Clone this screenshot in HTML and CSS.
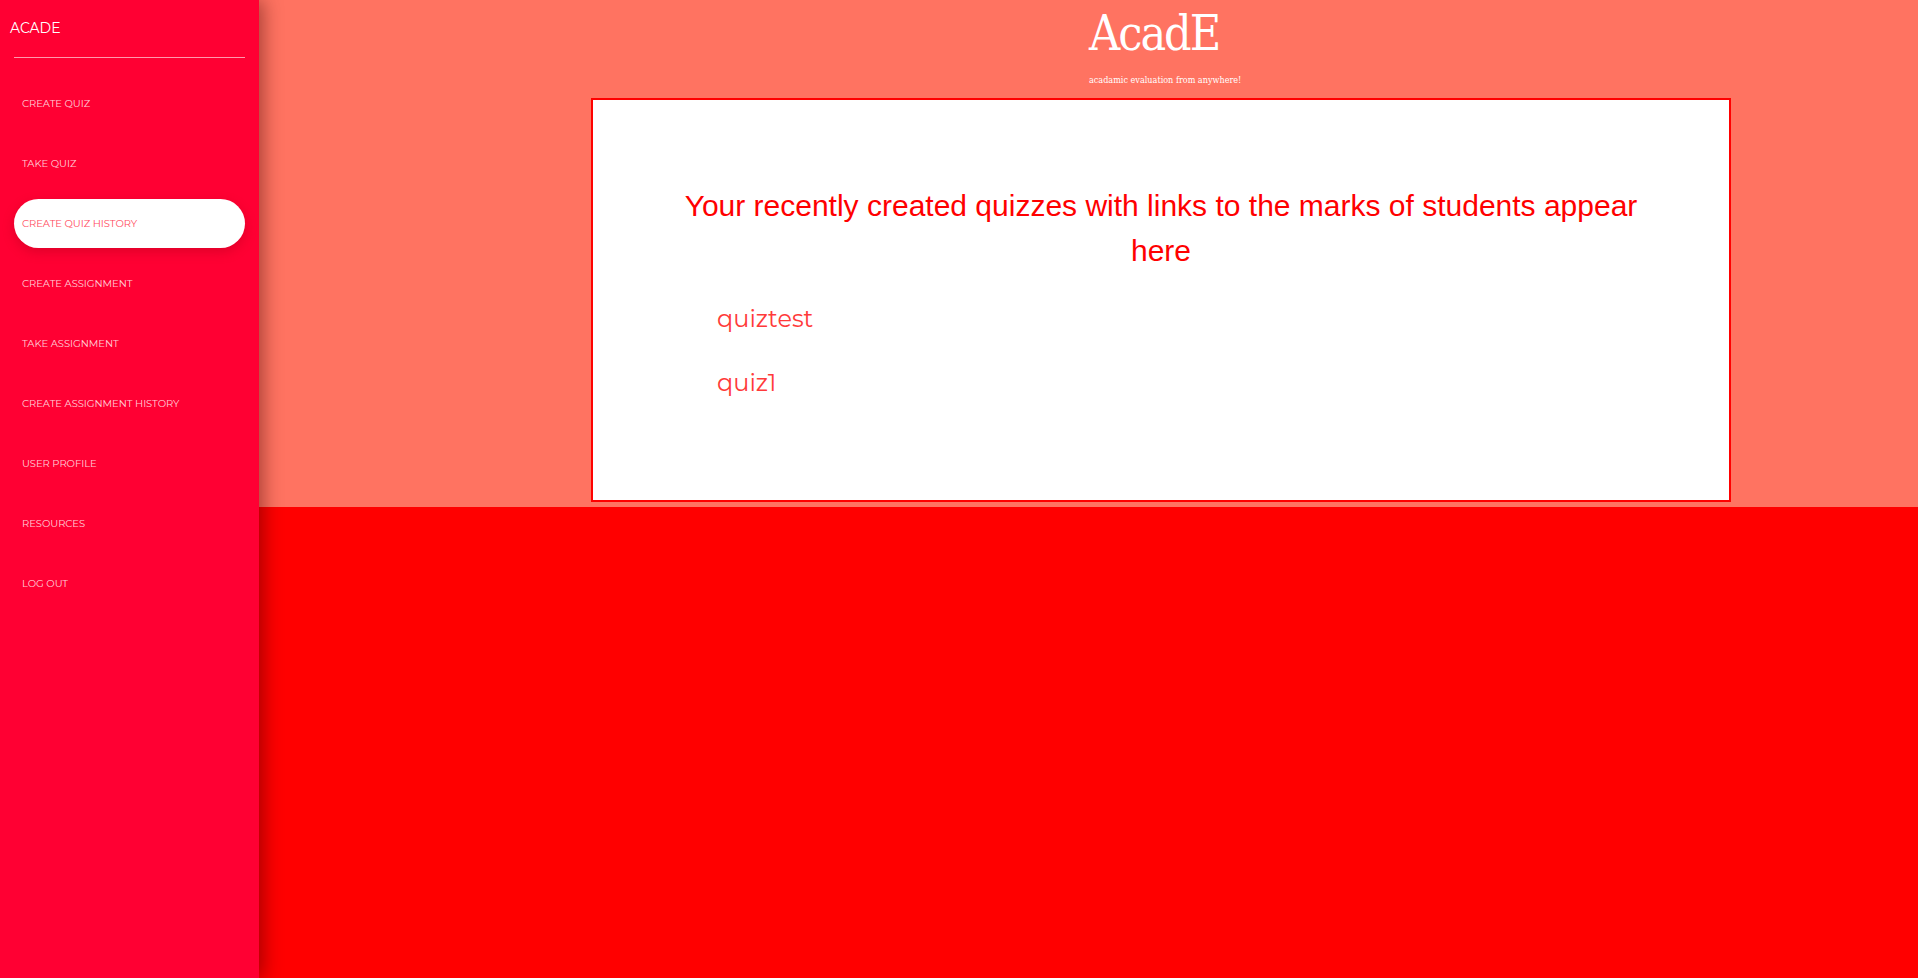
FILE: index.html
```html
<!DOCTYPE html>
<html>
<head>
<meta charset="utf-8">
<link rel="stylesheet" href="styles.css">
</head>
<body>
<div class="page">
  <aside class="sidebar">
    <div class="brand">ACADE</div>
    <hr class="rule">
    <nav class="menu">
      <a class="item">CREATE QUIZ</a>
      <a class="item">TAKE QUIZ</a>
      <a class="item active">CREATE QUIZ HISTORY</a>
      <a class="item">CREATE ASSIGNMENT</a>
      <a class="item">TAKE ASSIGNMENT</a>
      <a class="item">CREATE ASSIGNMENT HISTORY</a>
      <a class="item">USER PROFILE</a>
      <a class="item">RESOURCES</a>
      <a class="item">LOG OUT</a>
    </nav>
  </aside>
  <main class="main">
    <section class="top">
      <header class="hero">
        <h1 class="title">AcadE</h1>
        <p class="tagline">acadamic evaluation from anywhere!</p>
      </header>
      <div class="card">
        <h2 class="heading">Your recently created quizzes with links to the marks of students appear here</h2>
        <ul class="quizzes">
          <li class="quiz">quiztest</li>
          <li class="quiz">quiz1</li>
        </ul>
      </div>
    </section>
    <section class="bottom"></section>
  </main>
</div>
</body>
</html>
```
FILE: styles.css
```css
* { box-sizing: border-box; }
html, body { margin: 0; padding: 0; height: 100%; }
body { background: #ff0000; overflow: hidden; }

.page {
  display: flex;
  height: 978px;
}

.sidebar {
  width: 259px;
  flex: none;
  background: #ff0033;
  position: relative;
  z-index: 2;
  box-shadow: 4px 0 18px rgba(60, 0, 0, 0.45);
  font-family: "Montserrat", "Inter", "Open Sans", sans-serif;
  padding: 0 14px;
}

.brand {
  color: #fff;
  font-size: 14px;
  padding-top: 17px;
  margin-left: -4px;
  line-height: 22px;
  height: 57px;
}

.rule {
  border: 0;
  height: 1px;
  background: rgba(255, 255, 255, 0.6);
  margin: 0;
}

.menu {
  display: flex;
  flex-direction: column;
  gap: 11px;
  padding-top: 21px;
}

.item {
  display: block;
  height: 49px;
  line-height: 49px;
  padding-left: 8px;
  color: rgba(255, 255, 255, 0.82);
  font-size: 10px;
  letter-spacing: -0.05px;
  border-radius: 25px;
}

.item.active {
  background: #fff;
  color: #ff4a5c;
  box-shadow: 0 4px 12px rgba(150, 0, 20, 0.3);
}

.main {
  flex: 1;
  display: flex;
  flex-direction: column;
}

.top {
  background: #ff7361;
  height: 507px;
  padding-top: 1px;
}

.hero {
  padding-left: 830px;
}

.title {
  margin: 0;
  font-family: "DejaVu Serif Condensed", "DejaVu Serif", serif;
  font-stretch: condensed;
  font-weight: normal;
  color: #fff;
  font-size: 48px;
  line-height: 64px;
  letter-spacing: -2px;
  height: 64px;
}

.tagline {
  margin: 0;
  color: #fff;
  font-family: "DejaVu Serif Condensed", "DejaVu Serif", serif;
  font-stretch: condensed;
  font-size: 9px;
  line-height: 16px;
  height: 33px;
  padding-top: 7px;
}

.card {
  margin-left: 332px;
  width: 1140px;
  height: 404px;
  background: #fff;
  border: 2px solid #ff0000;
  padding: 83px 80px 0;
}

.heading {
  margin: 0;
  font-family: "Liberation Sans", Arial, sans-serif;
  font-weight: normal;
  color: #ff0000;
  font-size: 30px;
  line-height: 45px;
  text-align: center;
}

.quizzes {
  list-style: none;
  margin: 14px 0 0;
  padding: 0 0 0 44px;
}

.quiz {
  font-family: "Montserrat", "Inter", "Open Sans", sans-serif;
  color: #ff3a3a;
  font-size: 24px;
  line-height: 64px;
  height: 64px;
}

.bottom {
  flex: 1;
  background: #ff0000;
}
```
